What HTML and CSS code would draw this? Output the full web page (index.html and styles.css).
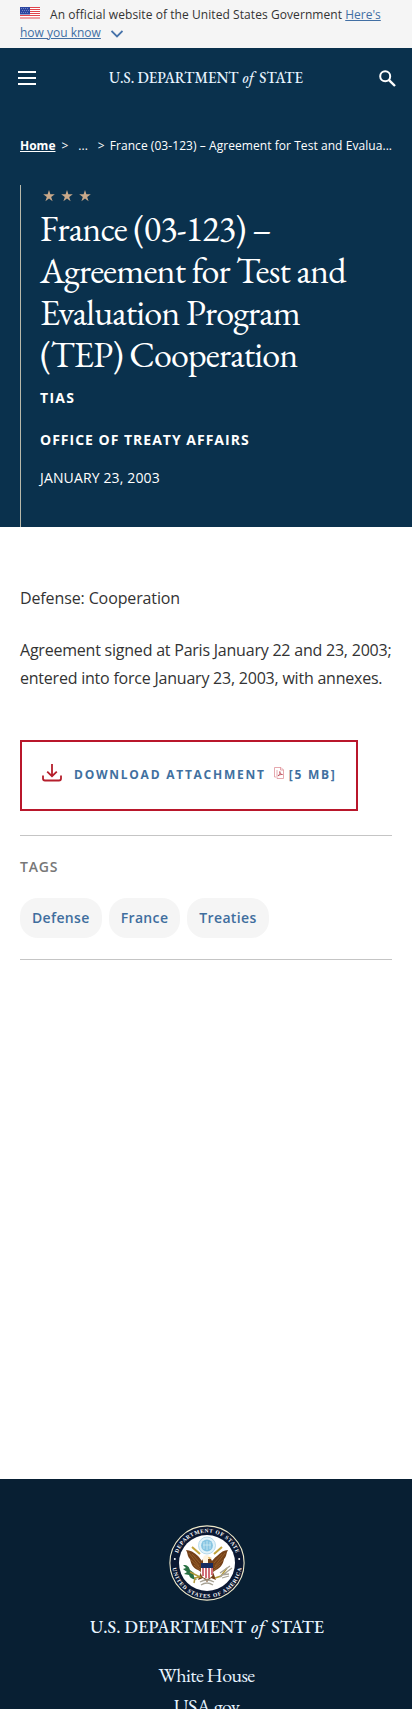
FILE: index.html
```html
<!DOCTYPE html>
<html lang="en">
<head>
<meta charset="utf-8">
<meta name="viewport" content="width=device-width, initial-scale=1">
<title>France (03-123) – Agreement for Test and Evaluation Program (TEP) Cooperation</title>
<link rel="stylesheet" href="styles.css">
</head>
<body>
<div class="gov-banner">
  <svg class="flag" viewBox="0 0 20 12" width="20" height="12" aria-hidden="true">
    <rect width="20" height="12" fill="#fff"/>
    <path d="M0 .5h20M0 2.5h20M0 4.5h20M0 6.5h20M0 8.5h20M0 11h20" stroke="#e0444c" stroke-width="1.2"/>
    <rect width="10" height="7.500" fill="#2b45a0"/>
    <path d="M1 1.5h8M2 3.5h8M1 5.5h8" stroke="#8294ce" stroke-width=".8" stroke-dasharray="1 1"/>
  </svg><span class="official">An official website of the United States Government</span> <a href="#">Here's<br>how you know</a>
  <svg class="chevron" viewBox="0 0 12 8" width="12" height="8" aria-hidden="true"><path d="M.5 1L6 6.500 11.500 1" fill="none" stroke="#4773aa" stroke-width="1.8"/></svg>
</div>
<header class="hero">
  <nav class="topbar">
    <svg viewBox="0 0 18 14" width="18" height="14"><path d="M0 1h18M0 7h18M0 13h18" stroke="#fff" stroke-width="2"/></svg>
    <svg class="wordmark" viewBox="0 0 194 20" width="194" height="20"><text x="0" y="15" font-size="16" textLength="194" lengthAdjust="spacingAndGlyphs">U.S. DEPARTMENT <tspan font-style="italic" dx="1">of</tspan><tspan dx="2.500"> STATE</tspan></text></svg>
    <svg class="search" viewBox="0 0 17 17" width="17" height="17" fill="none" stroke="#fff"><circle cx="6.2" cy="6.2" r="5" stroke-width="2"/><path d="M9.8 9.8l6.2 6.2" stroke-width="2.4"/></svg>
  </nav>
  <div class="crumbs"><a href="#">Home</a><span class="sep1">&gt;</span><span class="dots">...</span><span class="sep2">&gt;</span><span class="current">France (03-123) – Agreement for Test and Evalua...</span></div>
  <div class="headline">
    <svg class="stars" viewBox="0 0 48 12" width="48" height="12" fill="#c9a98a"><path id="star" d="M6 0l1.4 4.2h4.4L8.2 6.9l1.4 4.3L6 8.6l-3.6 2.6 1.4-4.3L.2 4.2h4.4z"/><use href="#star" x="18"/><use href="#star" x="36"/></svg>
    <h1>France (03-123) – Agreement for Test and Evaluation Program (TEP) Cooperation</h1>
    <p class="kind">TIAS</p>
    <p class="office">OFFICE OF TREATY AFFAIRS</p>
    <p class="date">JANUARY 23, 2003</p>
  </div>
</header>
<main>
  <p class="body-text">Defense: Cooperation</p>
  <p class="body-text second">Agreement signed at Paris January 22 and 23, 2003;<br>entered into force January 23, 2003, with annexes.</p>
  <a class="download" href="#">
    <svg class="tray" viewBox="0 0 20 18" width="20" height="18" fill="none" stroke="#b51f2c" stroke-width="1.8"><path d="M10 0v12M5.2 7.6L10 12.2l4.8-4.6"/><path d="M1 11.5v3q0 2 2 2h14q2 0 2-2v-3"/></svg>
    <span class="dl">DOWNLOAD ATTACHMENT</span>
    <svg class="pdf" viewBox="0 0 10 12" width="10" height="12" fill="none" stroke="#df939a" stroke-width=".8"><path d="M2 10H.5V.5H7l2.5 2.5v8.5H3V3"/><path d="M6.5.5V3h3"/><path d="M4 9c2-2 2-3 1.8-4.5C5.6 6 7 7.5 8.500 7.500 6.500 7.300 5 8 4 9z" stroke="#b94450"/></svg>
    <span class="size">[5 MB]</span>
  </a>
  <section class="tags">
    <h2>TAGS</h2>
    <div class="pills"><a href="#">Defense</a><a href="#">France</a><a href="#">Treaties</a></div>
  </section>
</main>
<footer>
  <svg class="seal" viewBox="0 0 76 76" width="76" height="76">
    <circle cx="38" cy="38" r="37.100" fill="#0b1832" stroke="#eee9ca" stroke-width="1.100"/>
    <circle cx="38" cy="38" r="28" fill="#fff"/>
    <path id="arc-top" d="M7.500 38a30.500 30.500 0 0 1 61 0" fill="none"/>
    <path id="arc-bottom" d="M3.200 38a34.800 34.800 0 0 0 69.600 0" fill="none"/>
    <text class="ring"><textPath href="#arc-top" startOffset="10" textLength="76">DEPARTMENT OF STATE</textPath></text>
    <text class="ring"><textPath href="#arc-bottom" startOffset="5" textLength="99">UNITED STATES OF AMERICA</textPath></text>
    <circle cx="5.800" cy="34" r="1" fill="#fff"/><circle cx="70.200" cy="34" r="1" fill="#fff"/>
    <circle cx="38" cy="20.500" r="8.500" fill="#e2f3fa" stroke="#9ccce2" stroke-width=".7"/>
    <circle cx="38" cy="20.500" r="5.900" fill="#87c5e2"/>
    <path d="M35 17v7M38 16v9M41 17v7M34 20h8" stroke="#d9f0f6" stroke-width=".7"/>
    <path d="M17 25c4 0 8 2 12 6 2 2 3 4 4 5l1-2h8l1 2c1-1 2-3 5-5 4-4 7-6 11-6-2 3-1 6-4 9-1 6-4 9-8 11l-3 2 3 8-5-2-4 4-4-4-5 2 3-8-3-2c-5-2-7-6-8-11-3-3-2-6-4-9z" fill="#754119"/>
    <path d="M20 28l10 13M23 29l8 9M22 35l9 8M25 40l7 6M56 28L46 41M53 29l-8 9M54 35l-9 8M51 40l-7 6" stroke="#a87035" stroke-width=".6"/>
    <path d="M23 22l8 7M53 22l-8 7" stroke="#c2a23a" stroke-width="2"/>
    <path d="M34 38v-4q0-4 4-4 3 0 3 3l-2 1v4z" fill="#fff4df"/><path d="M39 32l4 1-3 1z" fill="#dfa93d"/>
    <path d="M32 38h12v11q-1 4-6 5-5-1-6-5z" fill="#fff"/>
    <path d="M34 43v8M37 43v10M40 43v10M43 43v7" stroke="#bd3240" stroke-width="1.400"/>
    <path d="M32 38h12v5H32z" fill="#172d62"/>
    <path d="M14 40c5 0 6 2 7 5l4 3c-1 4 1 5 3 7-5-1-7-2-8-5l-5-1 3-2-4-3 3-1z" fill="#287042"/>
    <path d="M21 47l10 5-5 1-1 5M46 53l6-2 6-8" fill="none" stroke="#b39a3c" stroke-width="1.500"/>
    <path d="M51 48l10-7M51 52l12-9M53 53l7-2M52 50l8-1M31 57q7-4 14 0M32 60q6-4 12 0" stroke="#a8a396" fill="none" stroke-width="1.300"/>
  </svg>
  <svg class="foot-wordmark" viewBox="0 0 234 24" width="234" height="24"><text x="0" y="18" font-size="19.500" textLength="234" lengthAdjust="spacingAndGlyphs">U.S. DEPARTMENT <tspan font-style="italic" dx="1">of</tspan><tspan dx="3"> STATE</tspan></text></svg>
  <ul><li>White House</li><li>USA.gov</li></ul>
</footer>
</body>
</html>
```
FILE: styles.css
```css
* { box-sizing: border-box; }
html, body { height: 1709px; overflow: hidden; }
body { margin: 0; background: #fff; color: #323a45; font-family: "Open Sans", "Noto Sans", sans-serif; }
p, h1, h2, ul { margin: 0; padding: 0; }
.gov-banner { height: 48px; padding: 6px 20px 0; background: #f5f5f5; color: #333; font-size: 12px; line-height: 18px; white-space: nowrap; }
.gov-banner a { color: #426fa4; }
.flag { margin-right: 10px; vertical-align: 0; }
.official { letter-spacing: .07px; }
.chevron { margin-left: 7px; vertical-align: -1px; }
.hero { height: 479px; background: #0a314d; color: #fff; }
.topbar { height: 60px; padding: 0 16px 0 18px; display: flex; align-items: center; justify-content: space-between; }
.wordmark, .foot-wordmark { fill: #e7f4ff; font-family: "EB Garamond", "Liberation Serif", serif; font-weight: 500; overflow: visible; }
.wordmark { margin-left: -4px; }
.crumbs { display: flex; height: 77px; padding: 29px 20px 0; font-size: 12px; line-height: 18px; white-space: nowrap; }
.crumbs a { color: #fff; font-weight: 700; }
.sep1 { margin-left: 6px; }
.dots { margin-left: 10px; }
.sep2 { margin-left: 10px; }
.current { margin-left: 5px; letter-spacing: .06px; }
.headline { height: 342px; margin-left: 20px; padding: 5px 0 0 19px; border-left: 1px solid #b9b9aa; }
.stars { display: block; margin-left: 3px; }
h1 { width: 330px; margin-top: 6px; font: 400 36px/42px "EB Garamond", "Liberation Serif", serif; letter-spacing: -.82px; }
.kind, .office, .date { font-size: 14px; line-height: 20px; }
.kind, .office { font-weight: 700; letter-spacing: 1px; }
.kind { margin-top: 12px; letter-spacing: 1.3px; }
.office { margin-top: 22px; }
.date { margin-top: 18px; letter-spacing: .14px; }
main { height: 952px; padding: 57px 20px 0; }
.body-text { color: #333; font-size: 16px; line-height: 28px; letter-spacing: -.22px; white-space: nowrap; }
.body-text:first-child { letter-spacing: -.12px; }
.second { margin-top: 24px; }
.download { display: flex; width: 338px; height: 71px; margin-top: 48px; padding: 22px 0 0 20px; border: 2px solid #b9172b; color: #41709f; font-size: 12px; font-weight: 700; line-height: 22px; text-decoration: none; white-space: nowrap; }
.dl { margin-left: 12px; letter-spacing: 1.75px; }
.pdf { margin: 3px 0 0 8px; }
.size { margin-left: 5px; letter-spacing: 1.75px; }
.tags { height: 125px; margin-top: 24px; padding-top: 21px; border: solid #c5c5c5; border-width: 1px 0; }
h2 { color: #777; font-size: 14px; font-weight: 600; line-height: 20px; letter-spacing: .8px; }
.pills { display: flex; gap: 7px; margin-top: 21px; }
.pills a { height: 40px; padding: 0 12px; border-radius: 18px; background: #f5f5f5; color: #3f6e9e; font-size: 14px; font-weight: 600; line-height: 39px; letter-spacing: .35px; text-decoration: none; }
footer { display: flex; height: 230px; padding: 46px 0 0 1px; background: #081f33; color: #e7f4ff; flex-direction: column; align-items: center; }
footer > * { flex-shrink: 0; }
.seal { display: block; }
.ring { fill: #fff; font: 700 5.5px "Liberation Serif", serif; }
.foot-wordmark { margin-top: 14px; }
footer ul { margin-top: 21px; list-style: none; text-align: center; font: 20px/31px "EB Garamond", "Liberation Serif", serif; }
footer li { letter-spacing: -.6px; }
```
